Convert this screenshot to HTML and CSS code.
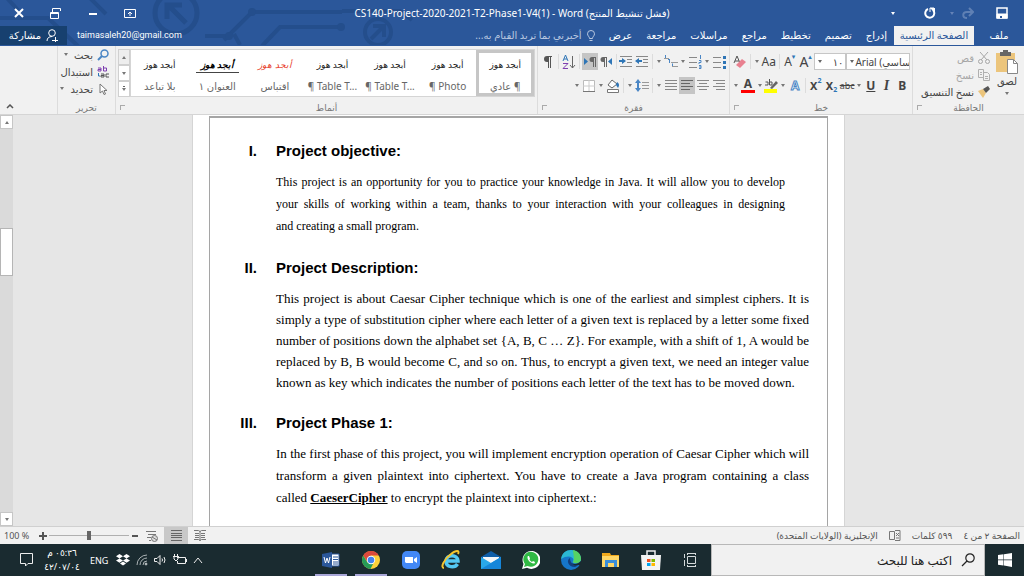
FILE: index.html
```
<!DOCTYPE html>
<html lang="ar" dir="rtl">
<head>
  <meta charset="UTF-8" />
  <meta name="viewport" content="width=device-width, initial-scale=1.0" />
  <title>CS140-Project-2020-2021-T2-Phase1-V4(1) - Word</title>
  <link rel="stylesheet" href="styles.css">
</head>
<body>
  <header class="header">
    <svg class="circuit" width="480" height="45" viewBox="0 0 480 45" fill="none" stroke="#244e8c" stroke-width="4">
      <path d="M5 -4L18 10M0 18H48L78 46M88 -4L106 14M224 40L252 12H342M262 46L280 27H342" />
      <path d="M205 36H228M234 34L240 45" />
      <circle cx="252" cy="12" r="2" />
      <circle cx="229" cy="36" r="2" />
      <circle cx="176" cy="13" r="21" stroke-width="5" />
      <path d="M186 23L168 5M167 19V5H182" stroke-width="5" />
      <circle cx="378" cy="32" r="13" />
      <path d="M371 39L383 27M373 26H384V37" />
      <path d="M342 11H400L412 20" />
      <circle cx="341" cy="27" r="2" />
    </svg>

    <div class="titlebar">
      <div class="quick">
        <button title="حفظ"><svg width="12" height="12" viewBox="0 0 12 12" fill="none" stroke="#fff"><path d="M1 1H11V11H1Z" stroke-width="1.5" /><path d="M1 7H11V11H1Z" fill="#fff" /><path d="M5 9V11" stroke="#2b579a" stroke-width="2" /></svg></button>
        <button title="إعادة"><svg width="12" height="12" viewBox="0 0 12 12" fill="none" stroke="#5f80b4" stroke-width="2"><path d="M10 5H5C0 5 0 11 5 11M7 1L11 5L7 9" /></svg></button>
        <span class="arrow dim"></span>
        <button title="تراجع"><svg width="12" height="12" viewBox="0 0 12 12" fill="none" stroke="#fff" stroke-width="2"><path d="M4 2A4.500 4.500 0 1 0 9 3" /><path d="M6 1H11V6Z" fill="#fff" stroke="none" /><path d="M6 5V1H10" stroke-width="1" /></svg></button>
        <span class="arrow light"></span>
      </div>
      <h1 dir="ltr">CS140-Project-2020-2021-T2-Phase1-V4(1) - Word <bdi>(فشل تنشيط المنتج)</bdi></h1>
      <div class="window-buttons" dir="ltr">
        <button title="إغلاق"><svg width="10" height="10" viewBox="0 0 10 10" stroke="#fff" stroke-width="2"><path d="M1 1L9 9M9 1L1 9" /></svg></button>
        <button title="استعادة"><svg width="11" height="11" viewBox="0 0 11 11" fill="none" stroke="#fff"><path d="M2.500 4V.500H10.500V3M.500 4.500H8.500V10.500H.500ZM.500 5.500H8.500" /></svg></button>
        <button title="تصغير"><svg width="10" height="10" viewBox="0 0 10 10" stroke="#fff" stroke-width="2"><path d="M1 6H9" /></svg></button>
        <button title="خيارات الشريط"><svg width="12" height="10" viewBox="0 0 12 10" fill="none" stroke="#fff"><path d="M.500 1.500H11.500V9.500H.500ZM6 8V4M4 6L6 4L8 6" /></svg></button>
      </div>
    </div>

    <nav class="tabs">
      <a href="#" class="file">ملف</a>
      <a href="#" class="active">الصفحة الرئيسية</a>
      <a href="#">إدراج</a>
      <a href="#">تصميم</a>
      <a href="#">تخطيط</a>
      <a href="#">مراجع</a>
      <a href="#">مراسلات</a>
      <a href="#">مراجعة</a>
      <a href="#">عرض</a>
      <a href="#" class="tell"><svg width="8" height="12" viewBox="0 0 8 12" fill="none" stroke="#b9c8e0"><path d="M2.500 8.500C2.500 6.500.500 6 .500 3.800A3.500 3.300 0 0 1 7.500 3.800C7.500 6 5.500 6.500 5.500 8.500ZM2.500 10.500H5.500" /></svg>أخبرني بما تريد القيام به...</a>
      <span class="account" dir="ltr">taimasaleh20@gmail.com</span>
      <button class="share"><svg width="12" height="13" viewBox="0 0 12 13" fill="none" stroke="#fff"><circle cx="6" cy="4" r="3.300" /><path d="M1 12C1 9 3 7.500 6 7.500M6 11.500H12M9.500 8V13" /></svg>مشاركة</button>
    </nav>
  </header>

  <section class="ribbon">
    <div class="group clipboard">
      <div class="group-body">
        <button class="paste">
          <svg width="22" height="24" viewBox="0 0 22 24"><path d="M0 3H19V22H0Z" fill="#ecc57c" /><path d="M4 2H7V0H12V2H15V6H4Z" fill="#666" /><path d="M11.500 9.500H17.500L21.500 13.500V23.500H11.500Z" fill="#fff" stroke="#888" /><path d="M17.500 9.500V13.500H21.500" fill="none" stroke="#888" /></svg>
          لصق
          <span class="arrow"></span>
        </button>
        <div class="stack">
          <button class="off"><svg width="12" height="12" viewBox="0 0 12 12" fill="none" stroke="#a6a6a6"><path d="M2 0L9 8M10 0L3 8" /><circle cx="2.500" cy="9.500" r="2" /><circle cx="9.500" cy="9.500" r="2" /></svg>قص</button>
          <button class="off"><svg width="12" height="12" viewBox="0 0 12 12" fill="none" stroke="#b0b0b0"><path d="M.500 .500H5.500V8.500H.500ZM5.500 3.500H9.500L11.500 5.500V11.500H5.500ZM7 7.500H10M7 9.500H10M2 3.500H4M2 5.500H4" /></svg>نسخ</button>
          <button><svg width="12" height="12" viewBox="0 0 12 12"><path d="M0 5L5 3L8 7L5 12Z" fill="#ecc57c" /><path d="M5 3L8 7L12 3L10 0Z" fill="#555" /></svg>نسخ التنسيق</button>
        </div>
      </div>
      <div class="group-label">الحافظة<i class="launcher"></i></div>
    </div>

    <div class="group font">
      <div class="group-body rows">
        <div class="row">
          <span class="combo font-name"><select aria-label="الخط" dir="ltr"><option>Arial (أساسي)</option></select></span>
          <span class="combo font-size"><select aria-label="حجم الخط"><option>١٠</option></select></span>
          <button class="tool big">A<sup>▴</sup></button>
          <button class="tool">A<sup>▾</sup></button>
          <i class="sep"></i>
          <button class="tool">Aa</button><span class="arrow"></span>
          <i class="sep"></i>
          <button class="tool"><svg width="14" height="14" viewBox="0 0 14 14"><path d="M1 8L4 1L7 8M2 6H6" fill="none" stroke="#555" /><path d="M3 10L9 4L13 7L7 13Z" fill="#e8808f" /></svg></button>
        </div>
        <div class="row">
          <button class="tool"><b>B</b></button>
          <button class="tool"><em>I</em></button>
          <button class="tool underline">U</button><span class="arrow"></span>
          <button class="tool strike">abc</button>
          <button class="tool heavy">X<sub>2</sub></button>
          <button class="tool heavy">X<sup>2</sup></button>
          <i class="sep"></i>
          <button class="tool outline">A</button><span class="arrow"></span>
          <button class="tool"><svg width="14" height="14" viewBox="0 0 14 14"><path d="M1 6H4V3H1.500M5.500 0V6H8V3H5.500" fill="none" stroke="#555" /><path d="M6 9L12 2L14 4L8 10Z" fill="#666" /><path d="M0 10H13V14H0Z" fill="#ff0" /></svg></button><span class="arrow"></span>
          <button class="tool color">A</button><span class="arrow"></span>
        </div>
      </div>
      <div class="group-label">خط<i class="launcher"></i></div>
    </div>

    <div class="group paragraph">
      <div class="group-body rows">
        <div class="row">
          <button class="tool"><svg width="14" height="14" viewBox="0 0 14 14"><path d="M1 2.500H9M1 7.500H9M1 12.500H9" stroke="#888" /><path d="M11 1H14V4H11ZM11 6H14V9H11ZM11 11H14V14H11Z" fill="#2e75b6" /></svg></button><span class="arrow"></span>
          <button class="tool"><svg width="14" height="14" viewBox="0 0 14 14"><path d="M1 2.500H9M1 7.500H9M1 12.500H9" stroke="#888" /><path d="M12.500 0V4M11 5.500H13V7.500H11V9M11 10.500H13V13.500H11M11 12H13" stroke="#4a86c5" fill="none" /></svg></button><span class="arrow"></span>
          <button class="tool"><svg width="14" height="14" viewBox="0 0 14 14"><path d="M0 3.500H5M7 7.500H14M8 11.500H14" stroke="#999" /><path d="M1.500 0V3M5.500 4V8M4 4.500H6M8.500 8.500V11" stroke="#4a86c5" /></svg></button><span class="arrow"></span>
          <i class="sep"></i>
          <button class="tool"><svg width="14" height="14" viewBox="0 0 14 14"><path d="M1 1.500H13M8 4.500H13M8 7.500H13M1 11.500H13" stroke="#888" /><path d="M0 6L4 3V5H7V7H4V9Z" fill="#2e75b6" /></svg></button>
          <button class="tool"><svg width="14" height="14" viewBox="0 0 14 14"><path d="M1 1.500H13M8 4.500H13M8 7.500H13M1 11.500H13" stroke="#888" /><path d="M7 6L3 3V5H0V7H3V9Z" fill="#2e75b6" /></svg></button>
          <i class="sep"></i>
          <button class="tool"><svg width="14" height="12" viewBox="0 0 14 12"><path d="M8 1H4A2.500 2.500 0 0 0 4 6H5V11H6V2H7V11H8Z" fill="#666" /><path d="M13 2V9L9 5.500Z" fill="#2e75b6" /></svg></button>
          <button class="tool on"><svg width="14" height="12" viewBox="0 0 14 12"><path d="M13 1H9A2.500 2.500 0 0 0 9 6H10V11H11V2H12V11H13Z" fill="#666" /><path d="M1 2V9L5 5.500Z" fill="#2e75b6" /></svg></button>
          <i class="sep"></i>
          <button class="tool"><svg width="14" height="14" viewBox="0 0 14 14" fill="none"><path d="M1 6L3.500 0L6 6M2 4H5" stroke="#2e75b6" /><path d="M1 8.500H6L1 13.500H6" stroke="#7e3fb0" /><path d="M10.500 1V13M8 10L10.500 13L13 10" stroke="#666" /></svg></button>
          <i class="sep"></i>
          <button class="tool"><svg width="12" height="14" viewBox="0 0 12 14"><path d="M10 1H5A3 3 0 0 0 5 7H6V13H7V2H8V13H9V2H10Z" fill="#555" /></svg></button>
        </div>
        <div class="row">
          <button class="tool"><svg width="12" height="12" viewBox="0 0 12 12" stroke="#888"><path d="M0 .500H12M3 3.500H12M0 6.500H12M3 9.500H12" /></svg></button>
          <button class="tool"><svg width="12" height="12" viewBox="0 0 12 12" stroke="#888"><path d="M0 .500H12M2 3.500H10M0 6.500H12M2 9.500H10" /></svg></button>
          <button class="tool on"><svg width="12" height="12" viewBox="0 0 12 12" stroke="#666"><path d="M0 .500H12M0 3.500H9M0 6.500H12M0 9.500H9" /></svg></button>
          <button class="tool"><svg width="12" height="12" viewBox="0 0 12 12" stroke="#888"><path d="M0 .500H12M0 3.500H12M0 6.500H12M0 9.500H12" /></svg></button><span class="arrow"></span>
          <i class="sep"></i>
          <button class="tool"><svg width="14" height="14" viewBox="0 0 14 14"><path d="M7 3.500H14M7 6.500H14M7 9.500H14" stroke="#999" /><path d="M0 4L3 0L6 4H4V9H6L3 13L0 9H2V4Z" fill="#4a86c5" /></svg></button><span class="arrow"></span>
          <i class="sep"></i>
          <button class="tool"><svg width="14" height="14" viewBox="0 0 14 14"><path d="M2 6L6 1L11 5L6 9Z" fill="#fff" stroke="#666" /><path d="M11 3C14 5 13 7 12 9L10 6Z" fill="#2e75b6" /><path d="M1.500 10.500H12.500V13.500H1.500Z" fill="#fff" stroke="#777" /></svg></button><span class="arrow"></span>
          <button class="tool"><svg width="12" height="12" viewBox="0 0 12 12"><path d="M.500 .500H11.500V11.500H.500Z" fill="#fff" stroke="#bbb" /><path d="M6 0V12M0 6H12" stroke="#ccc" /><path d="M0 11.500H12" stroke="#777" /></svg></button><span class="arrow"></span>
        </div>
      </div>
      <div class="group-label">فقرة<i class="launcher"></i></div>
    </div>

    <div class="group styles">
      <div class="group-body">
        <div class="gallery">
          <button class="selected"><span class="sample">أبجد هوز</span><span>¶ عادي</span></button>
          <button><span class="sample">أبجد هوز</span><span dir="ltr">¶ Photo</span></button>
          <button><span class="sample">أبجد هوز</span><span dir="ltr">¶ Table T...</span></button>
          <button><span class="sample">أبجد هوز</span><span dir="ltr">¶ Table T...</span></button>
          <button><span class="sample quote">أبجد هوز</span><span>اقتباس</span></button>
          <button><span class="sample heading">أبجد هوز</span><span>العنوان ١</span></button>
          <button><span class="sample">أبجد هوز</span><span>بلا تباعد</span></button>
        </div>
        <div class="gallery-scroll">
          <button title="أعلى"><span class="arrow up"></span></button>
          <button title="أسفل"><span class="arrow"></span></button>
          <button title="المزيد"><span class="arrow more"></span></button>
        </div>
      </div>
      <div class="group-label">أنماط<i class="launcher"></i></div>
    </div>

    <div class="group editing">
      <div class="group-body">
        <div class="stack">
          <button><svg width="12" height="12" viewBox="0 0 12 12" fill="none"><circle cx="7.500" cy="4.500" r="3.500" stroke="#4a86c5" stroke-width="1.500" /><path d="M5 7L1 11" stroke="#4a86c5" stroke-width="2" /></svg>بحث<span class="arrow"></span></button>
          <button><svg width="12" height="12" viewBox="0 0 12 12" fill="none"><path d="M1 2H4V5H1V3.500H4M6.500 0V5H9.500V2H6.500" stroke="#7e3fb0" /><path d="M4 8H7V11H4V9.500H7M12 8H9V11H12" stroke="#555" /><path d="M1.500 7V10H3" stroke="#2e75b6" /></svg>استبدال</button>
          <button><svg width="12" height="12" viewBox="0 0 12 12" fill="#fff" stroke="#777"><path d="M3 1V10L5.500 8L7 11.500L8.500 11L7 7.500H10Z" /></svg>تحديد<span class="arrow"></span></button>
        </div>
      </div>
      <div class="group-label">تحرير</div>
    </div>

    <button class="collapse" title="طي الشريط"><svg width="8" height="5" viewBox="0 0 8 5" fill="none" stroke="#555"><path d="M1 4L4 1L7 4" stroke-width="1.500" /></svg></button>
  </section>

  <main class="workspace" dir="ltr">
    <div class="scrollbar">
      <button title="أعلى"><span class="arrow up"></span></button>
      <div class="track"><div class="thumb"></div></div>
      <button title="أسفل"><span class="arrow"></span></button>
    </div>
    <div class="canvas">
      <article class="page" lang="en">
        <div class="frame">
          <h2><span>I.</span>Project objective:</h2>
          <p class="first">
            <span>This project is an opportunity for you to practice your knowledge in Java. It will allow you to develop</span>
            <span>your skills of working within a team, thanks to your interaction with your colleagues in designing</span>
            and creating a small program.
          </p>
          <h2><span>II.</span>Project Description:</h2>
          <p class="tight">This project is about Caesar Cipher technique which is one of the earliest and simplest ciphers. It is simply a type of substitution cipher where each letter of a given text is replaced by a letter some fixed number of positions down the alphabet set {A, B, C … Z}. For example, with a shift of 1, A would be replaced by B, B would become C, and so on. Thus, to encrypt a given text, we need an integer value known as key which indicates the number of positions each letter of the text has to be moved down.</p>
          <h2><span>III.</span>Project Phase 1:</h2>
          <p>In the first phase of this project, you will implement encryption operation of Caesar Cipher which will transform a given plaintext into ciphertext. You have to create a Java program containing a class called <b class="name">CaeserCipher</b> to encrypt the plaintext into ciphertext.:</p>
        </div>
      </article>
    </div>
  </main>

  <footer class="status">
    <div class="status-info">
      <span>الصفحة ٢ من ٤</span>
      <span>٥٩٩ كلمات</span>
      <svg width="12" height="11" viewBox="0 0 12 11" fill="none" stroke="#777"><path d="M.500 1.500H5.500V9.500H.500ZM6 .500H11V10.500H6M7 3L10 6M10 3L7 6M7 8H10" /></svg>
      <span>الإنجليزية (الولايات المتحدة)</span>
    </div>
    <div class="zoom" dir="ltr">
      <span class="percent">100 %</span>
      <button title="تكبير"><svg width="8" height="8" viewBox="0 0 8 8" stroke="#555" stroke-width="2"><path d="M4 0V8M0 4H8" /></svg></button>
      <input type="range" min="0" max="100" value="50" aria-label="تكبير/تصغير">
      <button title="تصغير"><svg width="8" height="8" viewBox="0 0 8 8" stroke="#555" stroke-width="2"><path d="M1 4H7" /></svg></button>
      <button class="view"><svg width="12" height="12" viewBox="0 0 12 12" fill="none" stroke="#777"><path d="M0 1.500H10M2 4.500H10M1 7.500H5M3 10.500H5" /><circle cx="8.500" cy="8.500" r="3" fill="#ddd" /><path d="M6 7L11 10" /></svg></button>
      <button class="view on"><svg width="11" height="11" viewBox="0 0 11 11" stroke="#666"><path d="M0 .500H11M0 3.500H11M0 5.500H11M0 7.500H11M0 10.500H11" /></svg></button>
      <button class="view"><svg width="12" height="11" viewBox="0 0 12 11" fill="none" stroke="#777"><path d="M0 .500H4.500L6 1.500L7.500 .500H12M0 9.500H4.500L6 10.500L7.500 9.500H12M6 1V11M1 3.500H5M7 3.500H11M1 5.500H5M7 5.500H11M1 7.500H5M7 7.500H11" /></svg></button>
    </div>
  </footer>

  <footer class="taskbar">
    <button class="start" title="ابدأ"><svg width="14" height="14" viewBox="0 0 14 14" fill="#fff"><path d="M14 0V6.500H6V1.200ZM5.500 1.200V6.500H0V2ZM14 7.200V14L6 12.600V7.200ZM5.500 7.200V12.500L0 11.700V7.200Z" /></svg></button>
    <label class="search">
      <svg width="14" height="14" viewBox="0 0 14 14" fill="none" stroke="#222" stroke-width="1.200"><circle cx="9" cy="5" r="4.200" /><path d="M6 8L1 13" /></svg>
      <input type="text" placeholder="اكتب هنا للبحث" aria-label="بحث">
    </label>
    <button class="app"><svg width="14" height="14" viewBox="0 0 14 14" fill="none" stroke="#d5dadb"><path d="M3.500 3.500H11.500V10.500H3.500ZM3.500 0V2M11.500 0V2M3.500 .500H11.500M3.500 13.500H11.500M11.500 12V14M3.500 12V14M.500 1V5M.500 7V13" /></svg></button>
    <button class="app" title="Store"><svg width="20" height="20" viewBox="0 0 20 20"><path d="M6 6V1H14V6" fill="none" stroke="#eee" stroke-width="1.500" /><path d="M0 5H20L19 20H1Z" fill="#f4f4f4" /><path d="M6 9H9.500V12H6Z" fill="#f25022" /><path d="M10.500 9H14V12H10.500Z" fill="#7fba00" /><path d="M6 13H9.500V16H6Z" fill="#00a4ef" /><path d="M10.500 13H14V16H10.500Z" fill="#ffb900" /></svg></button>
    <button class="app" title="Explorer"><svg width="20" height="20" viewBox="0 0 20 20"><path d="M1 3H9L10 5H18V17H1Z" fill="#f0a91d" /><path d="M1 6H18V17H1Z" fill="#ffd767" /><path d="M4 10H16V17H13V13H7V17H4Z" fill="#3b8ed8" /></svg></button>
    <button class="app" title="Edge"><svg width="20" height="20" viewBox="0 0 20 20"><circle cx="10" cy="10" r="10" fill="#1676c9" /><path d="M0 9C1 3 5 0 10 0C16 0 20 4 20 9C20 12 17 14 13 13C11 12.500 12 11 12.500 10C12 6 6 5 0 9Z" fill="#2bb8d4" /><path d="M12 0C17 1 20 4 20 9C20 12 17 14 13 13C11 12 13 11 13 9C13 6 12 3 12 0Z" fill="#56d364" /><path d="M9 8C5 10 7 17 14 17L18 15C14 16 9 14 9 8Z" fill="#123f7d" /><path d="M11 13C13 15 17 14 20 11V15L17 15C14 16 12 15 11 13Z" fill="#1a2a30" /></svg></button>
    <button class="app" title="WhatsApp"><svg width="18" height="18" viewBox="0 0 18 18"><path d="M0 18L1.500 13A9 9 0 1 1 5 16.700Z" fill="#fff" /><path d="M2 16L3 13A7.500 7.500 0 1 1 5.500 15Z" fill="#30b944" /><path d="M6 5C4 7 8 13 12.500 12.500L13 11L11 10L10 11C9 10.500 8 9.500 7.500 8.500L8 7.500L7 5Z" fill="#fff" /></svg></button>
    <button class="app" title="Mail"><svg width="20" height="18" viewBox="0 0 20 18"><path d="M0 6L10 0L20 6V10H0Z" fill="#0f5ea8" /><path d="M2 6H18V12H2Z" fill="#f4f6f8" /><path d="M0 6L10 12L20 6V18H0Z" fill="#29a8ea" /><path d="M0 18L20 6V18Z" fill="#1686d9" /></svg></button>
    <button class="app" title="Internet Explorer"><svg width="20" height="20" viewBox="0 0 20 20" fill="none"><path d="M5 11H17C17 4 5 4 5 11C5 18 14 18 16.500 14" stroke="#54c9f4" stroke-width="3.500" /><path d="M3 18C-1 18 3 9 10 4C15 0 19 0 17 4" stroke="#f6c52f" stroke-width="2" /></svg></button>
    <button class="app" title="Zoom"><svg width="18" height="18" viewBox="0 0 18 18"><rect width="18" height="18" rx="5" fill="#4388f5" /><path d="M3 6H11V12H4L3 11ZM12 8L15 6V12L12 10Z" fill="#fff" /></svg></button>
    <button class="app running" title="Chrome"><svg width="18" height="18" viewBox="0 0 18 18"><circle cx="9" cy="9" r="9" fill="#fdd03b" /><path d="M1.200 4.500A9 9 0 0 1 16.800 4.500H9L5.500 11Z" fill="#dc4a3d" /><path d="M1.200 4.500L5.500 11.500L11 13L8.500 18A9 9 0 0 1 1.200 4.500Z" fill="#279b57" /><circle cx="9" cy="9" r="4.200" fill="#fff" /><circle cx="9" cy="9" r="3.300" fill="#4482ee" /></svg></button>
    <button class="app running" title="Word"><svg width="18" height="16" viewBox="0 0 18 16"><path d="M9 2H17V14H9Z" fill="#fff" stroke="#2b579a" /><path d="M11 5H16M11 7.500H16M11 10H16M11 12H16" stroke="#2b579a" /><path d="M0 2L10 0V16L0 14Z" fill="#2b579a" /><path d="M2 5L3.500 11L5 6L6.500 11L8 5" fill="none" stroke="#fff" /></svg></button>

    <div class="tray" dir="ltr">
      <svg width="14" height="14" viewBox="0 0 14 14" fill="none" stroke="#eee"><path d="M.500 .500H12.500V10.500H8L5.500 13V10.500H.500Z" /></svg>
      <time class="clock" dir="rtl"><span>٠٥:٣٦ م</span><span>٤٢/٠٧/٠٤</span></time>
      <span class="lang">ENG</span>
      <svg width="14" height="12" viewBox="0 0 14 12" fill="#fff"><path d="M3.500 0L7 2.200L3.500 4.400L0 2.200ZM10.500 0L14 2.200L10.500 4.400L7 2.200ZM3.500 4.400L7 6.600L3.500 8.800L0 6.600ZM10.500 4.400L14 6.600L10.500 8.800L7 6.600ZM7 7.400L10 9.400L7 11.600L4 9.400Z" /></svg>
      <svg width="12" height="12" viewBox="0 0 12 12" fill="none" stroke="#aab2b4"><path d="M1 11A10 10 0 0 1 11 1M4 11A7 7 0 0 1 11 4M7 11A4 4 0 0 1 11 7" /><circle cx="10" cy="10" r="1" fill="#fff" /></svg>
      <svg width="13" height="12" viewBox="0 0 13 12" fill="none" stroke="#eee"><path d="M.500 4.500H3L6 1.500V10.500L3 7.500H.500ZM8 4.500Q9 6 8 7.500M10 3Q12 6 10 9" /></svg>
      <svg width="14" height="12" viewBox="0 0 14 12" fill="none" stroke="#eee"><path d="M4 3.500H12.500V9.500H4.500V7M13.500 5V8M0 2.500H6M1 3V5L3 7L5 5V3M1.500 0V2M4.500 0V2" /></svg>
      <svg width="10" height="7" viewBox="0 0 10 7" fill="none" stroke="#eee"><path d="M1 6L5 1L9 6" /></svg>
    </div>
  </footer>
</body>
</html>
```
FILE: styles.css
```
* {
  box-sizing: border-box;
}

body {
  margin: 0;
  height: 100vh;
  display: flex;
  flex-direction: column;
  overflow: hidden;
  font-family: "Noto Sans", "DejaVu Sans", sans-serif;
  font-size: 10px;
  color: #444;
  background-color: #e6e6e6;
}

button {
  font: inherit;
  color: inherit;
  background: none;
  border: none;
  padding: 0;
  display: flex;
  align-items: center;
  justify-content: center;
}

a {
  color: inherit;
  text-decoration: none;
}

svg {
  flex: none;
}

/* small drop-down triangle */
.arrow {
  width: 8px;
  display: flex;
  flex: none;
  justify-content: center;
}

.arrow::before {
  content: "";
  border: 2px solid transparent;
  border-top: 3px solid #777;
  border-bottom: none;
}

.arrow.up::before {
  border-top: none;
  border-bottom: 3px solid #777;
}

.arrow.dim::before {
  border-top-color: #6583b7;
}

.arrow.light::before {
  border-top-color: #fff;
}

/* header */
.header {
  position: relative;
  background-color: #2b579a;
  color: #fff;
}

.circuit {
  position: absolute;
  left: 0;
  top: 0;
}

.titlebar,
.tabs {
  position: relative;
}

.titlebar {
  display: grid;
  grid-template-columns: 1fr auto 1fr;
  align-items: center;
  height: 26px;
}

.titlebar h1 {
  margin: 0;
  font-size: 10px;
  font-weight: normal;
}

.quick {
  display: flex;
  align-items: center;
  gap: 12px;
  padding-right: 16px;
}

.quick button:first-child {
  margin-left: 10px;
}

.quick .arrow.dim {
  margin: 0 -6px 0 0;
}

.quick .arrow.light {
  margin-right: 15px;
}

.window-buttons {
  display: flex;
}

.window-buttons button {
  width: 37px;
}

.tabs {
  display: flex;
  height: 20px;
  border-bottom: 1px solid #2b579a;
  line-height: 19px;
}

.tabs a {
  padding: 0 7px;
  white-space: nowrap;
}

.tabs .file {
  width: 50px;
  text-align: center;
}

.tabs .active {
  width: 80px;
  padding: 0;
  text-align: center;
  background-color: #f1f1f1;
  color: #2b579a;
}

.tabs .tell {
  display: flex;
  align-items: center;
  gap: 5px;
  padding: 0 7px;
  color: #b9c8e0;
}

.account {
  margin-right: auto;
  padding: 0 10px;
  font-family: Roboto, "Noto Sans", sans-serif;
  font-size: 9px;
}

.share {
  width: 67px;
  gap: 5px;
  background-color: #17406f;
}

/* ribbon */
.ribbon {
  display: flex;
  height: 69px;
  background-color: #f1f1f1;
  border-bottom: 1px solid #d5d5d5;
}

.group {
  display: flex;
  flex-direction: column;
  flex: none;
  padding: 3px 2px 0;
  border-left: 1px solid #dcdcdc;
}

.group-body {
  display: flex;
  flex: 1;
}

.group-label {
  position: relative;
  height: 12px;
  line-height: 11px;
  font-size: 9px;
  text-align: center;
  color: #777;
}

.launcher {
  position: absolute;
  left: 2px;
  top: 3px;
  width: 5px;
  height: 5px;
  border-left: 1px solid #aaa;
  border-top: 1px solid #aaa;
}

.clipboard {
  width: 112px;
}

.paste {
  flex-direction: column;
  justify-content: flex-start;
  width: 30px;
  padding-top: 1px;
  line-height: 15px;
}

.paste .arrow {
  margin-top: 3px;
}

.stack {
  display: flex;
  flex-direction: column;
  padding-right: 2px;
}

.stack button {
  height: 17px;
  gap: 4px;
  justify-content: flex-start;
  white-space: nowrap;
}

.off {
  color: #a6a6a6;
}

.font {
  width: 183px;
}

.paragraph {
  width: 192px;
}

.rows {
  flex-direction: column;
  gap: 7px;
  padding-top: 4px;
}

.row {
  display: flex;
  align-items: center;
  height: 17px;
}

.tool {
  width: 16px;
  height: 17px;
  font-size: 12px;
  line-height: 16px;
  direction: ltr;
}

.tool.big {
  font-size: 14px;
}

.tool.on {
  background-color: #c5c5c5;
}

.tool sup,
.tool sub {
  font-size: 7px;
  line-height: 8px;
  color: #2e75b6;
}

.tool sup {
  align-self: flex-start;
}

.tool sub {
  align-self: flex-end;
}

.tool.strike {
  font-size: 9px;
  text-decoration: line-through;
}

.tool.heavy {
  font-weight: bold;
  font-size: 11px;
}

.tool.underline {
  font-weight: bold;
  text-decoration: underline;
}

.tool em {
  font-family: "Liberation Serif", serif;
  font-size: 14px;
  font-weight: bold;
}

.tool.outline {
  color: #fff;
  font-weight: bold;
  -webkit-text-stroke: 1px #4a86c5;
}

.tool.color {
  height: 15px;
  line-height: 12px;
  font-weight: bold;
  border-bottom: 3px solid #f00;
}

.row .color {
  width: 14px;
  margin: 0 1px;
}

.sep {
  width: 1px;
  height: 15px;
  margin: 0 2px;
  background-color: #dcdcdc;
}

.combo {
  position: relative;
  height: 17px;
  background-color: #fff;
  border: 1px solid #c6c6c6;
}

.combo::before {
  content: "";
  position: absolute;
  left: 3px;
  top: 6px;
  border: 2px solid transparent;
  border-top: 3px solid #666;
  border-bottom: none;
}

.combo select {
  appearance: none;
  width: 100%;
  height: 15px;
  padding: 0 8px;
  border: none;
  background: none;
  font-family: inherit;
  font-size: 10px;
  color: #444;
}

.font-name {
  width: 64px;
}

.font-name select {
  padding-right: 0;
}

.font-size {
  width: 33px;
}

.font-size select {
  padding: 0 2px;
}

/* style gallery */
.styles {
  width: 422px;
}

.gallery {
  display: flex;
  flex: 1;
  height: 48px;
  background-color: #fff;
  border: 1px solid #d5d5d5;
}

.gallery button {
  flex: 1;
  flex-direction: column;
  justify-content: space-between;
  padding: 5px 0 0;
  border: 3px solid transparent;
  line-height: 14px;
  white-space: nowrap;
  color: #666;
}

.gallery .selected {
  border-color: #c6c6c6;
}

.gallery .sample {
  font-size: 9px;
  color: #222;
}

.gallery .quote {
  color: #e8402a;
  font-style: italic;
}

.gallery .heading {
  padding: 0 5px;
  font-weight: bold;
  font-style: italic;
  color: #000;
  border-bottom: 1px solid #444;
}

.gallery-scroll {
  display: flex;
  flex-direction: column;
  width: 12px;
  height: 48px;
}

.gallery-scroll button {
  flex: 1;
  border: 1px solid #d0d0d0;
  background-color: #fff;
}

.gallery-scroll button:first-child {
  background-color: #eee;
}

.arrow.more::before {
  box-shadow: 0 -3px 0 -1px #666;
}

.editing {
  width: 58px;
  padding-top: 0;
}

.editing .stack {
  padding-right: 4px;
}

.collapse {
  width: 20px;
  margin-right: auto;
  align-items: flex-end;
  padding-bottom: 5px;
}

/* document */
.workspace {
  display: flex;
  flex: 1;
  min-height: 0;
}

.scrollbar {
  display: flex;
  flex-direction: column;
  width: 13px;
  background-color: #dadada;
}

.scrollbar button {
  height: 14px;
  background-color: #fff;
  border: 1px solid #c6c6c6;
}

.track {
  flex: 1;
  display: flex;
  flex-direction: column;
}

.track::before {
  content: "";
  flex: 26;
}

.track::after {
  content: "";
  flex: 62;
}

.thumb {
  flex: 12;
  background-color: #fff;
  border: 1px solid #b5b5b5;
}

.canvas {
  flex: 1;
  overflow: hidden;
}

.page {
  max-width: 653px;
  margin: 0 auto;
  padding: 1px 16px 0;
  background-color: #fff;
  border: 1px solid #d5d5d5;
  border-top: none;
}

.frame {
  min-height: 100vh;
  padding: 23px 18px 0 66px;
  border: 1px solid #a5a5a5;
  border-top-width: 2px;
  color: #000;
}

.frame h2 {
  display: flex;
  gap: 19px;
  margin: 0 0 10px -46px;
  font-family: "Liberation Sans", Arial, sans-serif;
  font-size: 15px;
  line-height: 20px;
}

.frame h2 span {
  width: 27px;
  text-align: right;
}

.frame p {
  margin: 0 0 21px;
  font-family: "Liberation Serif", "Times New Roman", serif;
  font-size: 13px;
  line-height: 22px;
  text-align: justify;
}

.frame .first {
  padding-right: 24px;
  font-size: 12px;
}

.first span {
  display: block;
  text-align-last: justify;
}

.frame .tight {
  margin-bottom: 20px;
  line-height: 21px;
}

.name {
  text-decoration: underline;
}

/* status bar */
.status {
  display: flex;
  justify-content: space-between;
  height: 18px;
  background-color: #f1f1f1;
  border-top: 1px solid #d0d0d0;
  color: #555;
}

.status-info,
.zoom {
  display: flex;
  align-items: center;
}

.status-info {
  gap: 11px;
  padding-right: 4px;
  font-size: 9px;
}

.zoom {
  padding-left: 4px;
}

.percent {
  width: 34px;
  font-size: 9px;
}

.zoom button {
  width: 10px;
}

.zoom input {
  appearance: none;
  width: 80px;
  height: 1px;
  margin: 0 1px;
  background-color: #b0b0b0;
}

.zoom input::-webkit-slider-thumb {
  appearance: none;
  width: 4px;
  height: 9px;
  background-color: #666;
}

.zoom .view {
  width: 24px;
  height: 17px;
}

.zoom .view.on {
  background-color: #c8c8c8;
}

/* taskbar */
.taskbar {
  display: flex;
  height: 32px;
  background-color: #1a2b30;
  color: #fff;
}

.start {
  width: 39px;
}

.search {
  display: flex;
  align-items: center;
  flex: 0 1 274px;
  gap: 9px;
  padding: 0 9px;
  background-color: #f1f1f1;
  border: 1px solid #b8b8b8;
}

.search input {
  flex: 1;
  min-width: 0;
  padding: 0;
  border: none;
  background: none;
  font-family: inherit;
  font-size: 12px;
}

.search input::placeholder {
  color: #222;
}

.app {
  position: relative;
  width: 40px;
}

.running::after {
  content: "";
  position: absolute;
  left: 4px;
  right: 4px;
  bottom: 0;
  height: 2px;
  background-color: #a9a7d8;
}

.tray {
  display: flex;
  align-items: center;
  gap: 6px;
  margin-right: auto;
  padding-left: 20px;
  font-size: 9px;
}

.clock {
  display: flex;
  flex-direction: column;
  width: 44px;
  align-items: center;
  line-height: 14px;
}

.lang {
  margin-right: 2px;
}
```
